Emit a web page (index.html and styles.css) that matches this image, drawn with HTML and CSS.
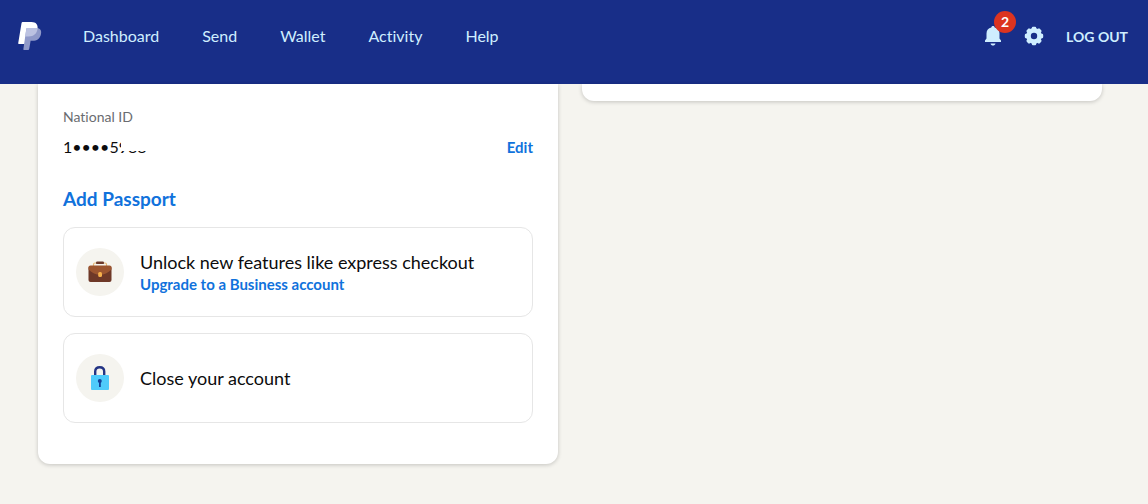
FILE: index.html
```html
<!DOCTYPE html>
<html lang="en">
<head>
    <meta charset="UTF-8">
    <meta name="viewport" content="width=device-width, initial-scale=1.0">
    <title>PayPal: Account Settings</title>
    <link rel="stylesheet" href="styles.css">
</head>
<body>

    <!-- Top bar -->
    <header class="header">
        <a class="logo" href="#" aria-label="PayPal">
            <svg width="24" height="28" viewBox="0 0 24 28">
                <path fill="#fff" d="M5 0H13.500C18 0 20.300 2.800 19.500 7.200 18.700 12 15.500 14.500 10.500 14.500H8.200L6.800 22H0.900C0.400 22 0.100 21.700 0.200 21.200L3.500 1.200C3.600 0.400 4.200 0 5 0Z"/>
                <path fill="#8f99c9" d="M9.500 6H18.500C22.200 6 23.800 8.500 23 12 22 16.800 19 18.800 14.500 18.800H12.600L11.200 27C11.100 27.600 10.700 28 10.100 28H6.200C5.600 28 5.300 27.600 5.400 27L8.300 7C8.400 6.300 8.900 6 9.500 6Z"/>
                <path fill="#bcc2e1" d="M9.500 6H18.500C19 6 19.300 6 19.700 6.100 19 11.800 16 14.500 10.500 14.500H7.200L8.300 7C8.400 6.300 8.900 6 9.500 6Z"/>
            </svg>
        </a>
        <nav class="nav">
            <a href="#">Dashboard</a>
            <a href="#">Send</a>
            <a href="#">Wallet</a>
            <a href="#">Activity</a>
            <a href="#">Help</a>
        </nav>
        <div class="tools">
            <button class="icon-button" type="button" aria-label="Notifications">
                <svg width="18" height="20" viewBox="0 0 18 20">
                    <path fill="#cfeeff" d="M9 0C10 0 10.700 0.700 10.700 1.600 13.700 2.300 15.500 4.500 15.500 7.500V12.500L17 14.500V16H1V14.500L2.500 12.500V7.500C2.500 4.500 4.300 2.300 7.300 1.600 7.300 0.700 8 0 9 0ZM6.500 17.500H11.500C11.100 18.900 10.200 19.500 9 19.500S6.900 18.900 6.500 17.500Z"/>
                </svg>
                <span class="badge">2</span>
            </button>
            <a class="icon-button" href="#" aria-label="Settings">
                <svg width="20" height="20" viewBox="-10 -10 20 20">
                    <g fill="#cfeeff">
                        <rect x="-2.200" y="-9.200" width="4.400" height="18.400" rx="1.200"/>
                        <rect x="-2.200" y="-9.200" width="4.400" height="18.400" rx="1.200" transform="rotate(45)"/>
                        <rect x="-2.200" y="-9.200" width="4.400" height="18.400" rx="1.200" transform="rotate(90)"/>
                        <rect x="-2.200" y="-9.200" width="4.400" height="18.400" rx="1.200" transform="rotate(135)"/>
                        <circle r="7.900"/>
                    </g>
                    <circle r="3.200" fill="#182e88"/>
                </svg>
            </a>
            <a class="logout" href="#">LOG OUT</a>
        </div>
    </header>

    <main class="columns">
        <section class="card">
            <div class="field-label">National ID</div>
            <div class="field-row">
                <span class="id-number">1••••5988<span class="id-mask"></span></span>
                <a class="edit" href="#">Edit</a>
            </div>
            <a class="add-passport" href="#">Add Passport</a>

            <div class="tile">
                <span class="tile-icon">
                    <svg width="24" height="24" viewBox="0 0 24 24">
                        <path fill="none" stroke="#e5b878" stroke-width="1.200" d="M5.500 6V4.500C5.500 3.600 6 3 7 3H17C18 3 18.500 3.600 18.500 4.500V6"/>
                        <rect x="8" y="1.500" width="8" height="2.600" rx="1.200" fill="#6b382a"/>
                        <rect x="0.500" y="6" width="23" height="16" rx="2" fill="#6e3828"/>
                        <path fill="#9c5530" d="M2.500 5.500H21.500C22.800 5.500 23.500 6.200 23.500 7.500V9.500C20 13 16 14.700 12 14.700S4 13 0.500 9.500V7.500C0.500 6.200 1.200 5.500 2.500 5.500Z"/>
                        <rect x="10.200" y="12" width="3.800" height="5" rx="1.500" fill="#f5b04c"/>
                    </svg>
                </span>
                <div>
                    <div class="tile-title">Unlock new features like express checkout</div>
                    <a class="tile-link" href="#">Upgrade to a Business account</a>
                </div>
            </div>

            <div class="tile">
                <span class="tile-icon">
                    <svg width="24" height="24" viewBox="0 0 24 24">
                        <path fill="none" stroke="#243484" stroke-width="2.400" d="M7.200 10V5.500C7.200 2.500 9 1.200 11.700 1.200S16.200 2.500 16.200 5.500V10"/>
                        <rect x="3" y="9" width="18" height="15" rx="1" fill="#4fcbfb"/>
                        <circle cx="11.800" cy="15" r="2" fill="#12419a"/>
                        <rect x="11" y="15" width="1.800" height="6" fill="#12419a"/>
                    </svg>
                </span>
                <a class="tile-title" href="#">Close your account</a>
            </div>
        </section>

        <section class="card card-empty"></section>
    </main>

</body>
</html>
```
FILE: styles.css
```css
* {
    box-sizing: border-box;
}
body {
    margin: 0;
    background-color: #f5f4ef;
    color: #0c0c0d;
    font-family: Lato, "Noto Sans", sans-serif;
    font-variant-ligatures: none;
}
a {
    color: #1072dc;
    text-decoration: none;
}
svg {
    display: block;
}
.header {
    display: flex;
    align-items: center;
    padding: 16px 20px 28px 18px;
    background-color: #182e88;
}
.header a {
    color: #cfeeff;
}
.nav {
    display: flex;
    gap: 43px;
    margin-left: 41px;
    font-size: 16px;
    line-height: 40px;
}
.tools {
    display: flex;
    align-items: center;
    gap: 22px;
    margin-left: auto;
}
.icon-button {
    position: relative;
    padding: 0;
    border: 0;
    background: none;
    cursor: pointer;
}
.badge {
    position: absolute;
    top: -15px;
    left: 10px;
    width: 22px;
    border-radius: 50%;
    background-color: #dc3420;
    color: #fff;
    font: bold 14px/22px Lato, sans-serif;
    text-align: center;
}
.logout {
    font-size: 14px;
    font-weight: bold;
}
.columns {
    display: grid;
    grid-template-columns: 1fr 1fr;
    align-items: start;
    gap: 24px;
    padding: 0 46px 40px 38px;
}
.card {
    padding: 24px 25px 41px;
    border-radius: 0 0 12px 12px;
    background-color: #fff;
    box-shadow: 0 1px 4px rgba(0, 0, 0, 0.2);
}
.card-empty {
    padding: 0 0 17px;
}
.field-label {
    color: #6a6c70;
    font-size: 14px;
    line-height: 18px;
}
.field-row {
    display: flex;
    align-items: center;
    justify-content: space-between;
    margin-top: 9px;
    line-height: 24px;
}
.id-number {
    position: relative;
    font-size: 16px;
}
/* hides the end of the number */
.id-mask {
    position: absolute;
    top: 0;
    right: 0;
    width: 26px;
    height: 16px;
    background-color: #fff;
}
.edit {
    font-size: 15px;
    font-weight: bold;
}
.add-passport {
    display: block;
    margin: 28px 0 16px;
    font-size: 19px;
    font-weight: bold;
    line-height: 24px;
}
.tile {
    display: flex;
    align-items: center;
    gap: 16px;
    min-height: 90px;
    padding: 12px;
    border: 1px solid #e6e6e6;
    border-radius: 12px;
}
.tile + .tile {
    margin-top: 16px;
}
.tile-icon {
    display: flex;
    flex: none;
    align-items: center;
    justify-content: center;
    width: 48px;
    height: 48px;
    border-radius: 50%;
    background-color: #f5f4ef;
}
.tile-title {
    color: #0c0c0d;
    font-size: 18px;
    line-height: 24px;
}
.tile-link {
    display: block;
    font-size: 15px;
    font-weight: bold;
    line-height: 20px;
}
```
